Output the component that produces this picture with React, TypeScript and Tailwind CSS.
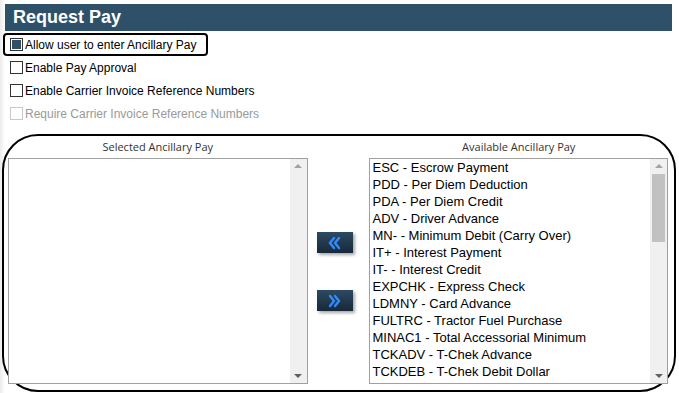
const available = [
  "ESC - Escrow Payment",
  "PDD - Per Diem Deduction",
  "PDA - Per Diem Credit",
  "ADV - Driver Advance",
  "MN- - Minimum Debit (Carry Over)",
  "IT+ - Interest Payment",
  "IT- - Interest Credit",
  "EXPCHK - Express Check",
  "LDMNY - Card Advance",
  "FULTRC - Tractor Fuel Purchase",
  "MINAC1 - Total Accessorial Minimum",
  "TCKADV - T-Chek Advance",
  "TCKDEB - T-Chek Debit Dollar",
  "TCKEXP - T-Chek Express Code",
];

function Box({ checked, disabled }: { checked?: boolean; disabled?: boolean }) {
  return (
    <span
      className={`w-[13px] h-[13px] border flex items-center justify-center bg-white shrink-0 ${
        disabled ? "border-[#c8c8c8]" : "border-[#333]"
      }`}
    >
      {checked && <span className="w-[9px] h-[9px] bg-[#2e5169]" />}
    </span>
  );
}

function Check({
  label,
  checked,
  disabled,
  focused,
}: {
  label: string;
  checked?: boolean;
  disabled?: boolean;
  focused?: boolean;
}) {
  return (
    <div className="h-[23px] flex items-center">
      <label
        className={`flex items-center gap-[2px] h-[23px] pl-[5px] pr-[10px] ${
          focused ? "border-2 border-black rounded-[4px]" : "border-2 border-transparent"
        } ${disabled ? "text-[#999]" : "text-black"}`}
      >
        <Box checked={checked} disabled={disabled} />
        <span>{label}</span>
      </label>
    </div>
  );
}

function Scrollbar({ thumb }: { thumb?: boolean }) {
  return (
    <div className="w-[17px] bg-[#f0f0f0] flex flex-col items-center justify-between py-[5px]">
      <span className="w-0 h-0 border-l-[4px] border-r-[4px] border-b-[4px] border-l-transparent border-r-transparent border-b-[#a3a3a3]" />
      <div className="flex-1 w-full px-[2px] pt-[6px]">
        {thumb && <div className="h-[68px] bg-[#c1c1c1]" />}
      </div>
      <span className="w-0 h-0 border-l-[4px] border-r-[4px] border-t-[4px] border-l-transparent border-r-transparent border-t-[#606060]" />
    </div>
  );
}

function Chevrons({ dir }: { dir: "left" | "right" }) {
  const d =
    dir === "left"
      ? "M7 2 L3 7 L7 12 M12 2 L8 7 L12 12"
      : "M3 2 L7 7 L3 12 M8 2 L12 7 L8 12";
  return (
    <svg width="15" height="14" viewBox="0 0 15 14">
      <path d={d} fill="none" stroke="#2f8cff" strokeWidth="2.4" strokeLinecap="round" />
    </svg>
  );
}

function MoveButton({ dir }: { dir: "left" | "right" }) {
  return (
    <button className="w-[36px] h-[21px] bg-gradient-to-b from-[#2d4a62] to-[#18293a] shadow-[2px_2px_3px_rgba(0,0,0,0.35)] flex items-center justify-center">
      <Chevrons dir={dir} />
    </button>
  );
}

export default function App() {
  return (
    <div
      className="w-[679px] h-[393px] bg-white overflow-hidden relative text-[12px]"
      style={{ fontFamily: "'Liberation Sans', Arial, sans-serif" }}
    >
      <div className="absolute left-0 top-0 bottom-0 w-[5px] bg-gradient-to-r from-[#ececec] to-white" />
      <div className="relative pt-[4px] pl-[5px] pr-[7px]">
        <div className="h-[27px] bg-[#2e5169] text-white font-bold text-[18px] flex items-center pl-[8px]">
          Request Pay
        </div>
      </div>
      <div className="relative pl-[3px] pt-[2px]">
        <Check label="Allow user to enter Ancillary Pay" checked focused />
        <Check label="Enable Pay Approval" />
        <Check label="Enable Carrier Invoice Reference Numbers" />
        <Check label="Require Carrier Invoice Reference Numbers" disabled />
      </div>
      <div className="relative ml-[2px] mr-[3px] mt-[9px] h-[258px] border-2 border-black rounded-[36px] flex pl-[4px] pr-[6px] pt-[1px]">
        <div className="w-[300px] flex flex-col">
          <div
            className="h-[21px] flex items-center justify-center text-[11px] text-[#333]"
            style={{ fontFamily: "'Open Sans', sans-serif" }}
          >
            Selected Ancillary Pay
          </div>
          <div className="h-[226px] border border-[#a0a0a0] flex">
            <div className="flex-1 bg-white" />
            <Scrollbar />
          </div>
        </div>
        <div className="w-[62px] flex flex-col items-start pl-[9px] pt-[95px] gap-[37px]">
          <MoveButton dir="left" />
          <MoveButton dir="right" />
        </div>
        <div className="w-[299px] flex flex-col">
          <div
            className="h-[21px] flex items-center justify-center text-[11px] text-[#333]"
            style={{ fontFamily: "'Open Sans', sans-serif" }}
          >
            Available Ancillary Pay
          </div>
          <div className="h-[226px] border border-[#a0a0a0] flex">
            <div className="flex-1 overflow-hidden pl-[2px] text-[13px] leading-[17px] text-black">
              {available.map((a) => (
                <div key={a} className="whitespace-nowrap">
                  {a}
                </div>
              ))}
            </div>
            <Scrollbar thumb />
          </div>
        </div>
      </div>
    </div>
  );
}
